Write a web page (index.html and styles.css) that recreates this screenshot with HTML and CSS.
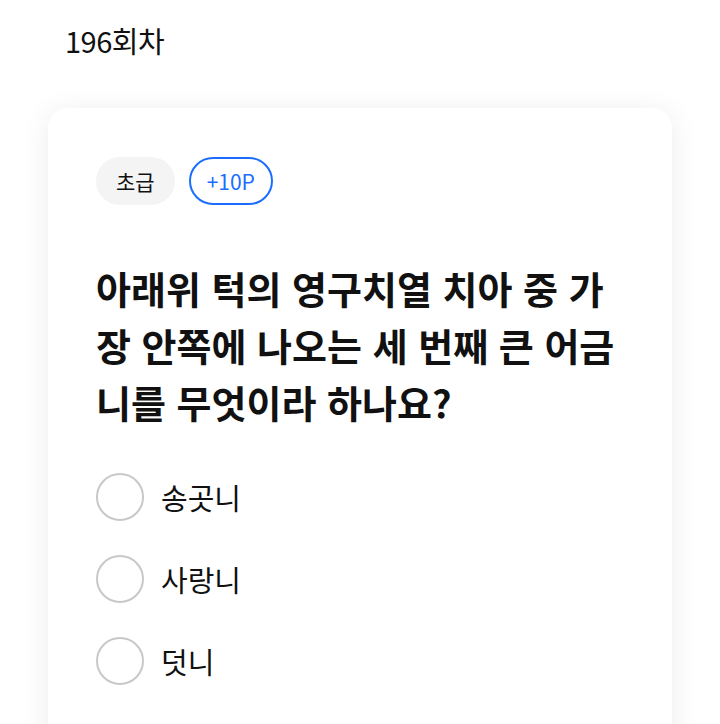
FILE: index.html
```html
<!DOCTYPE html>
<html lang="ko">
<head>
  <meta charset="UTF-8">
  <title>196회차 퀴즈</title>
  <link rel="stylesheet" href="styles.css">
</head>
<body>
  <h1 class="round">196회차</h1>

  <div class="card">
    <div class="tags">
      <span class="tag level">초급</span>
      <span class="tag point">+10P</span>
    </div>

    <h2 class="question">아래위 턱의 영구치열 치아 중 가장 안쪽에 나오는 세 번째 큰 어금니를 무엇이라 하나요?</h2>

    <ul class="options">
      <li class="option"><span class="radio"></span><span class="option-text">송곳니</span></li>
      <li class="option"><span class="radio"></span><span class="option-text">사랑니</span></li>
      <li class="option"><span class="radio"></span><span class="option-text">덧니</span></li>
    </ul>
  </div>
</body>
</html>
```

FILE: styles.css
```css
body { margin: 0; background: #fff; font-family: "Noto Sans CJK KR", "Noto Sans", sans-serif; color: #111; overflow: hidden; }
.round { font-size: 29px; font-weight: 400; margin: 0; padding: 20px 0 0 65px; line-height: 40px; letter-spacing: -0.5px; }
.card { margin: 48px 48px 0 48px; background: #fff; border-radius: 20px; box-shadow: 0 4px 30px rgba(0, 0, 0, 0.08); padding: 49px 48px 40px 48px; min-height: 700px; }
.tags { display: flex; gap: 14px; }
.tag { height: 48px; box-sizing: border-box; border-radius: 24px; display: inline-flex; align-items: center; font-size: 21px; padding: 0 20px; }
.level { background: #f4f4f4; color: #111; }
.point { border: 2px solid #1a6dff; color: #1a6dff; padding: 0 16px; }
.question { font-size: 38px; font-weight: 700; line-height: 57px; margin: 54px 0 0 0; word-break: break-all; }
.options { list-style: none; margin: 43px 0 0 0; padding: 0; display: flex; flex-direction: column; gap: 34px; }
.option { display: flex; align-items: center; gap: 17px; height: 48px; }
.radio { width: 48px; height: 48px; box-sizing: border-box; border: 2px solid #c8c8c8; border-radius: 50%; }
.option-text { font-size: 29px; }
```
